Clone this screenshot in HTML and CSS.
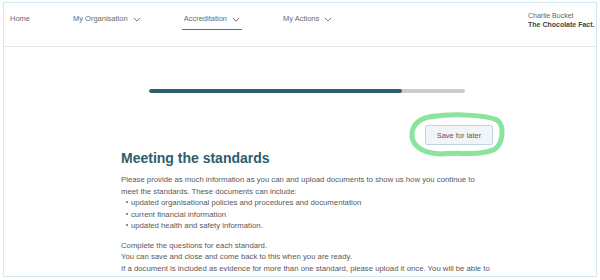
FILE: index.html
```html
<!DOCTYPE html>
<html>
<head>
<meta charset="utf-8">
<link rel="stylesheet" href="styles.css">
</head>
<body>
<div class="frame">
  <header class="header">
    <nav class="nav">
      <a class="nav-item">Home</a>
      <a class="nav-item">My Organisation <svg class="chev" viewBox="0 0 10 6"><path d="M1 1 L5 5 L9 1" /></svg></a>
      <a class="nav-item active">Accreditation <svg class="chev" viewBox="0 0 10 6"><path d="M1 1 L5 5 L9 1" /></svg></a>
      <a class="nav-item">My Actions <svg class="chev" viewBox="0 0 10 6"><path d="M1 1 L5 5 L9 1" /></svg></a>
    </nav>
    <div class="user">
      <div class="user-name">Charlie Bucket</div>
      <div class="user-org">The Chocolate Fact.</div>
    </div>
  </header>
  <main class="main">
    <div class="progress"><div class="progress-fill" style="width:80%"></div></div>
    <div class="actions">
      <div class="btn-wrap">
        <button class="btn">Save for later</button>
        <svg class="ring" viewBox="0 0 97 46"><path d="M22 5 C 45 1, 78 3, 89 8 C 97 14, 95 31, 87 37 C 74 44, 52 40, 32 42 C 12 41, 3 32, 4 21 C 5 12, 11 6, 26 4" /></svg>
      </div>
    </div>
    <h1 class="title">Meeting the standards</h1>
    <p class="text">Please provide as much information as you can and upload documents to show us how you continue to meet the standards. These documents can include:</p>
    <ul class="list">
      <li>updated organisational policies and procedures and documentation</li>
      <li>current financial information</li>
      <li>updated health and safety information.</li>
    </ul>
    <p class="text">Complete the questions for each standard.<br>You can save and close and come back to this when you are ready.<br>If a document is included as evidence for more than one standard, please upload it once. You will be able to</p>
  </main>
</div>
</body>
</html>
```
FILE: styles.css
```css
html, body {
  margin: 0;
  padding: 0;
  background: #ffffff;
}
body {
  font-family: "Liberation Sans", Arial, sans-serif;
  color: #595959;
}
.frame {
  margin: 2px 3px 0 3px;
  height: 273px;
  border: 1px solid #d5e9f3;
  overflow: hidden;
  background: #fff;
}
.header {
  height: 43px;
  border-bottom: 1px solid #e4e7e9;
  display: flex;
  align-items: flex-start;
}
.nav {
  display: flex;
  gap: 39px;
  padding: 11px 0 0 4px;
}
.nav-item {
  font-size: 7.5px;
  color: #6a6a6a;
  padding: 0 2px 5px 2px;
  display: flex;
  align-items: center;
  gap: 5px;
  line-height: 10px;
  border-bottom: 1.5px solid transparent;
}
.nav-item.active {
  border-bottom-color: #5f7077;
}
.chev {
  width: 8px;
  height: 5px;
  fill: none;
  stroke: #555;
  stroke-width: 1;
}
.user {
  margin-left: auto;
  width: 68px;
  padding-top: 9px;
  font-size: 7px;
  line-height: 8.5px;
  white-space: nowrap;
  overflow: hidden;
}
.user-name {
  color: #666;
}
.user-org {
  color: #444;
  font-weight: bold;
}
.main {
  width: 372px;
  margin: 0 0 0 117px;
  padding-top: 42px;
}
.progress {
  width: 316px;
  height: 4px;
  margin: 0 auto;
  background: #cccccc;
  border-radius: 2px;
  overflow: hidden;
}
.progress-fill {
  height: 100%;
  background: #2e5e6c;
  border-radius: 2px;
}
.actions {
  display: flex;
  justify-content: flex-end;
  margin-top: 32px;
}
.btn-wrap {
  position: relative;
}
.btn {
  width: 68px;
  height: 20px;
  padding: 0;
  font-family: "Liberation Sans", Arial, sans-serif;
  font-size: 7.5px;
  color: #5a5a5a;
  background: #f2f5f7;
  border: 1px solid #bcd5e8;
  border-radius: 2px;
  display: block;
}
.ring {
  position: absolute;
  left: -17px;
  top: -13px;
  width: 97px;
  height: 46px;
  fill: none;
  stroke: #8ae49e;
  stroke-width: 5;
  stroke-linecap: round;
  overflow: visible;
}
.title {
  font-size: 14px;
  line-height: 16px;
  color: #2d5d6b;
  margin: 5px 0 8px 0;
  font-weight: bold;
}
.text {
  font-size: 7.75px;
  line-height: 11.5px;
  margin: 0;
}
.list {
  font-size: 7.75px;
  line-height: 11.5px;
  margin: 0 0 8px 0;
  padding-left: 10px;
  list-style: none;
}
.list li::before {
  content: "";
  display: inline-block;
  width: 2.4px;
  height: 2.4px;
  border-radius: 50%;
  background: #666;
  margin: 0 3px 1.5px -5.5px;
  vertical-align: middle;
}
```
